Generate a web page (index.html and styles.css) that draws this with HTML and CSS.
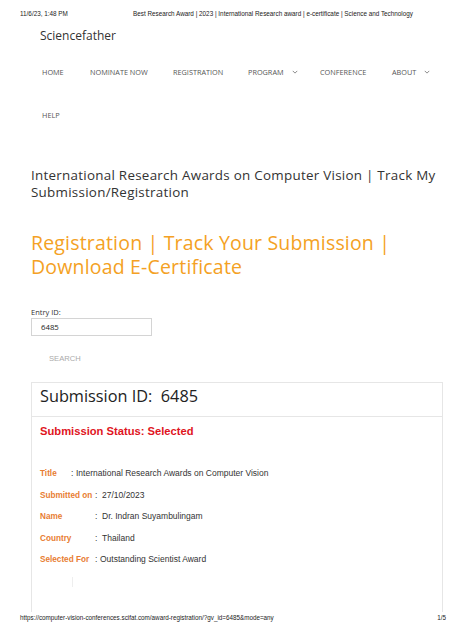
FILE: index.html
```html
<!DOCTYPE html>
<html>
<head>
<meta charset="utf-8">
<link rel="stylesheet" href="styles.css">
</head>
<body>
<div class="page">
  <header class="print-head">
    <span class="ph-date">11/6/23, 1:48 PM</span>
    <span class="ph-title">Best Research Award | 2023 | International Research award | e-certificate | Science and Technology</span>
  </header>
  <div class="content">
    <div class="brand">Sciencefather</div>
    <nav class="nav">
      <span class="nav-item">HOME</span>
      <span class="nav-item">NOMINATE NOW</span>
      <span class="nav-item">REGISTRATION</span>
      <span class="nav-item">PROGRAM <svg class="chev" viewBox="0 0 8 5" width="6" height="4"><path d="M1 1l3 3 3-3" fill="none" stroke="#666" stroke-width="1"/></svg></span>
      <span class="nav-item">CONFERENCE</span>
      <span class="nav-item">ABOUT <svg class="chev" viewBox="0 0 8 5" width="6" height="4"><path d="M1 1l3 3 3-3" fill="none" stroke="#666" stroke-width="1"/></svg></span>
      <span class="nav-item help">HELP</span>
    </nav>
    <h1 class="page-title">International Research Awards on Computer Vision | Track My Submission/Registration</h1>
    <h2 class="orange-title">Registration | Track Your Submission | Download E-Certificate</h2>
    <form class="search-form">
      <label class="entry-label">Entry ID:</label>
      <div class="entry-input">6485</div>
      <div class="search-btn">SEARCH</div>
    </form>
    <section class="card">
      <div class="card-head">Submission ID:&nbsp; 6485</div>
      <div class="card-body">
        <div class="status">Submission Status: Selected</div>
        <div class="rows">
          <div class="row"><span class="lbl t">Title</span><span class="colon">:</span><span class="val">International Research Awards on Computer Vision</span></div>
          <div class="row"><span class="lbl w">Submitted on</span><span class="colon">:</span><span class="val wide">27/10/2023</span></div>
          <div class="row"><span class="lbl w">Name</span><span class="colon">:</span><span class="val wide">Dr. Indran Suyambulingam</span></div>
          <div class="row"><span class="lbl w">Country</span><span class="colon">:</span><span class="val wide">Thailand</span></div>
          <div class="row"><span class="lbl w">Selected For</span><span class="colon">:</span><span class="val">Outstanding Scientist Award</span></div>
        </div>
        <div class="ghost"><span class="ghost-bar"></span></div>
      </div>
    </section>
  </div>
  <footer class="print-foot">
    <span>https://computer-vision-conferences.scifat.com/award-registration/?gv_id=6485&amp;mode=any</span>
    <span>1/5</span>
  </footer>
</div>
</body>
</html>
```
FILE: styles.css
```css
* { box-sizing: border-box; }
html, body { margin: 0; padding: 0; background: #fff; }
.page {
  width: 474px;
  height: 632px;
  display: flex;
  flex-direction: column;
  overflow: hidden;
}
.print-head {
  display: flex;
  font-family: "Liberation Sans", Arial, sans-serif;
  font-size: 6.35px;
  color: #222;
  padding: 10px 0 0 20px;
  height: 18px;
}
.ph-date { width: 113px; }
.content {
  flex: 1;
  overflow: hidden;
  padding: 0 31px;
}
.brand {
  font-family: "Open Sans", sans-serif;
  font-size: 12px;
  color: #333;
  padding: 9px 0 0 9px;
  line-height: 17px;
}
.nav {
  display: grid;
  grid-template-columns: 48px 83px 75px 72px 72px auto;
  font-family: "Open Sans", sans-serif;
  font-size: 7.3px;
  color: #555;
  padding: 23px 0 0 11px;
  row-gap: 33px;
}
.nav-item { display: inline-flex; align-items: center; line-height: 10px; white-space: nowrap; }
.chev { margin-left: 8px; }
.help { grid-column: 1 / 2; }
.page-title {
  font-family: "Open Sans", sans-serif;
  font-weight: 400;
  font-size: 13.4px;
  line-height: 16.5px;
  letter-spacing: 0.27px;
  color: #333;
  margin: 47px 0 0 0;
}
.orange-title {
  font-family: "Open Sans", sans-serif;
  font-weight: 400;
  font-size: 19.5px;
  line-height: 24px;
  letter-spacing: 0.18px;
  color: #f4a124;
  margin: 31px 0 0 0;
}
.search-form {
  display: flex;
  flex-direction: column;
  align-items: flex-start;
  margin-top: 28px;
  font-family: "Open Sans", sans-serif;
}
.entry-label { font-size: 7.5px; color: #333; line-height: 10px; }
.entry-input {
  width: 121px;
  height: 18px;
  border: 1px solid #d4d4d4;
  font-size: 7.8px;
  color: #222;
  padding: 3px 0 0 9px;
  margin-top: 1px;
}
.search-btn {
  font-family: "Liberation Sans", Arial, sans-serif;
  font-size: 7.6px;
  color: #aaa;
  margin: 18px 0 0 18px;
}
.card {
  margin-top: 19px;
  border: 1px solid #e6e6e6;
  border-bottom: none;
  height: 240px;
}
.card-head {
  font-family: "Open Sans", sans-serif;
  font-size: 16.3px;
  color: #222;
  height: 34px;
  padding: 2px 0 0 8px;
  border-bottom: 1px solid #e6e6e6;
}
.card-body { padding: 8px 0 0 8px; }
.status {
  font-family: "Liberation Sans", Arial, sans-serif;
  font-weight: 700;
  font-size: 11.2px;
  color: #e0141e;
  line-height: 12px;
}
.rows {
  display: flex;
  flex-direction: column;
  gap: 8px;
  margin-top: 30px;
  font-family: "Liberation Sans", Arial, sans-serif;
  font-size: 8.5px;
  line-height: 13.5px;
}
.row { display: flex; white-space: nowrap; }
.lbl { color: #e87d32; font-weight: 700; font-size: 8.2px; }
.lbl.t { width: 31px; }
.lbl.w { width: 55px; }
.colon { color: #333; width: 5px; }
.val { color: #333; }
.val.wide { padding-left: 2px; }
.ghost { margin: 10px 0 0 0; height: 14px; }
.ghost-bar { display: block; width: 1px; height: 10px; background: #eee; margin-left: 32px; }
.print-foot {
  display: flex;
  justify-content: space-between;
  font-family: "Liberation Sans", Arial, sans-serif;
  font-size: 6.3px;
  color: #222;
  padding: 0 28px 11px 20px;
  height: 20px;
  align-items: flex-end;
}
```
